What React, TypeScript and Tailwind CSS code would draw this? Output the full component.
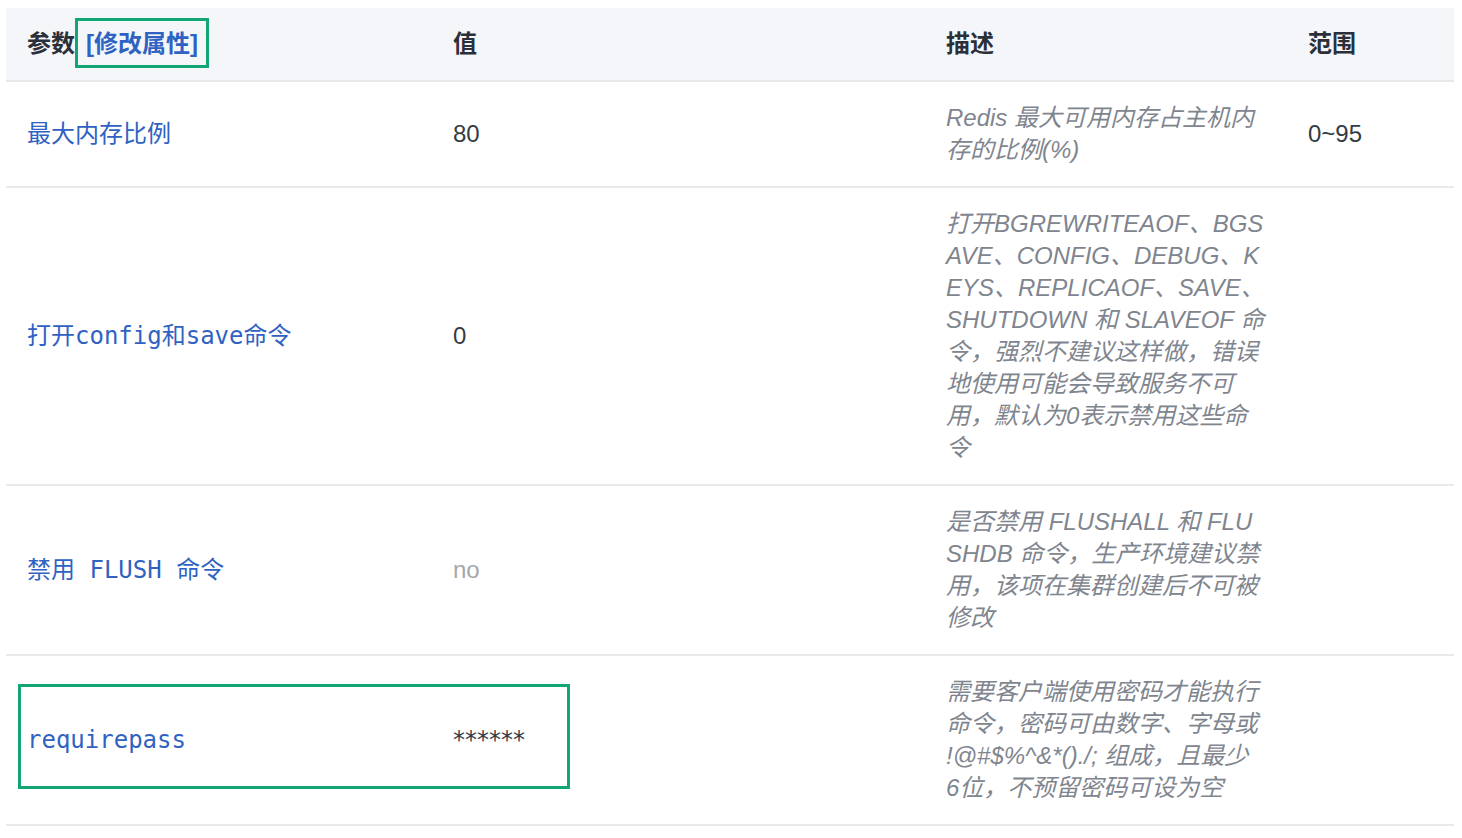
import React from 'react';

const sans = 'font-["Liberation_Sans","Noto_Sans_CJK_SC",sans-serif]';
const mono = 'font-["DejaVu_Sans_Mono","Noto_Sans_CJK_SC",monospace]';

type Row = {
  name: React.ReactNode;
  value: string;
  valueClass: string;
  desc: string[];
  range?: string;
};

const rows: Row[] = [
  {
    name: <span className={sans}>最大内存比例</span>,
    value: '80',
    valueClass: 'text-[#353b44]',
    desc: ['Redis 最大可用内存占主机内', '存的比例(%)'],
    range: '0~95',
  },
  {
    name: <code className={mono}>打开config和save命令</code>,
    value: '0',
    valueClass: 'text-[#353b44]',
    desc: [
      '打开BGREWRITEAOF、BGS',
      'AVE、CONFIG、DEBUG、K',
      'EYS、REPLICAOF、SAVE、',
      'SHUTDOWN 和 SLAVEOF 命',
      '令，强烈不建议这样做，错误',
      '地使用可能会导致服务不可',
      '用，默认为0表示禁用这些命',
      '令',
    ],
  },
  {
    name: <code className={mono}>禁用 FLUSH 命令</code>,
    value: 'no',
    valueClass: 'text-[#a4a7ab]',
    desc: [
      '是否禁用 FLUSHALL 和 FLU',
      'SHDB 命令，生产环境建议禁',
      '用，该项在集群创建后不可被',
      '修改',
    ],
  },
  {
    name: <code className={mono}>requirepass</code>,
    value: '******',
    valueClass: 'text-[#353b44] font-["DejaVu_Sans",sans-serif]',
    desc: [
      '需要客户端使用密码才能执行',
      '命令，密码可由数字、字母或',
      '!@#$%^&*()./; 组成，且最少',
      '6位，不预留密码可设为空',
    ],
  },
];

const App: React.FC = () => {
  return (
    <div className={`min-h-[838px] bg-white pt-2 pl-[6px] ${sans}`}>
      <div className="relative w-[1448px]">
        <table className="w-[1448px] table-fixed border-collapse text-[24px]">
          <colgroup>
            <col className="w-[426px]" />
            <col className="w-[493px]" />
            <col className="w-[362px]" />
            <col className="w-[167px]" />
          </colgroup>
          <thead>
            <tr className="h-[73px] bg-[#f4f6fa] border-b-2 border-[#e6e8eb] text-left font-bold text-[#2b3038]">
              <th className="pl-[21px] font-bold">
                参数
                <span className="relative ml-[11px] text-[#2f62c2]">
                  [修改属性]
                  <span className="absolute -left-[11px] -right-[11px] -top-[12px] -bottom-[11px] border-[3px] border-[#12a674]" />
                </span>
              </th>
              <th className="pl-[21px] font-bold">值</th>
              <th className="pl-[21px] font-bold">描述</th>
              <th className="pl-[21px] font-bold">范围</th>
            </tr>
          </thead>
          <tbody>
            {rows.map((row, i) => (
              <tr key={i} className="border-b-2 border-[#e8eaed]">
                <td className="pl-[21px] align-middle text-[#2f62c2]">{row.name}</td>
                <td className={`pl-[21px] align-middle ${row.valueClass}`}>{row.value}</td>
                <td className="pl-[21px] py-[20px] align-middle italic leading-[32px] text-[#7f858e]">
                  {row.desc.map((line, j) => (
                    <span key={j} className="block whitespace-nowrap">
                      {line}
                    </span>
                  ))}
                </td>
                <td className="pl-[21px] align-middle text-[#353b44]">{row.range}</td>
              </tr>
            ))}
          </tbody>
        </table>
        {/* annotation box over requirepass row */}
        <div className="absolute left-[12px] top-[676px] h-[105px] w-[552px] border-[3px] border-[#12a674]" />
      </div>
    </div>
  );
};

export default App;
